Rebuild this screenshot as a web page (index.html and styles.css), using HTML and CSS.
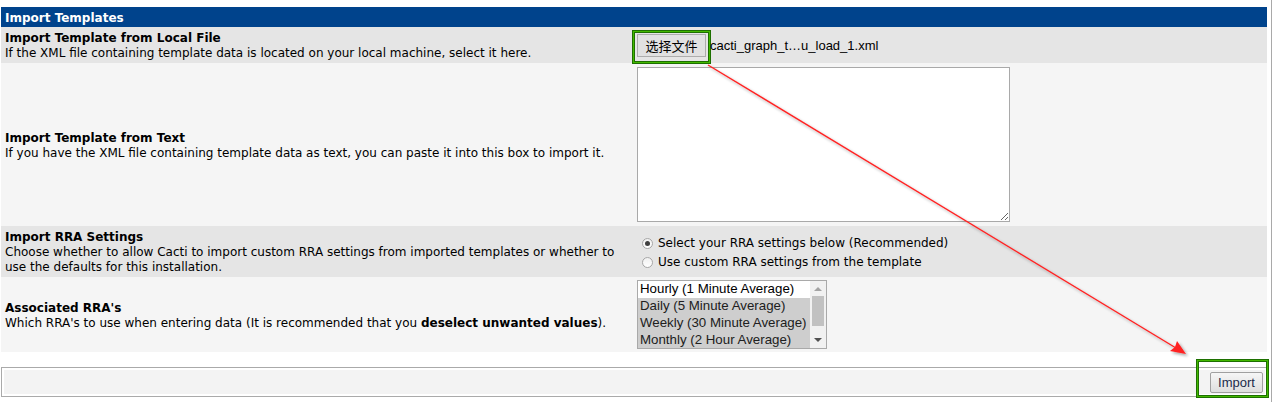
FILE: index.html
```html
<!DOCTYPE html>
<html>
<head>
<meta charset="utf-8">
<title>Import Templates</title>
<link rel="stylesheet" href="styles.css">
</head>
<body>
<div class="page">
  <table class="form">
    <tr class="hdr"><td colspan="2">Import Templates</td></tr>
    <tr class="odd r1">
      <td class="lbl"><b>Import Template from Local File</b><br>If the XML file containing template data is located on your local machine, select it here.</td>
      <td class="ctl">
        <div class="file">
          <span class="hl hl-file"><button class="btn-file">选择文件</button></span>
          <span class="fname">cacti_graph_t…u_load_1.xml</span>
        </div>
      </td>
    </tr>
    <tr class="even r2">
      <td class="lbl"><b>Import Template from Text</b><br>If you have the XML file containing template data as text, you can paste it into this box to import it.</td>
      <td class="ctl"><textarea class="txt"></textarea></td>
    </tr>
    <tr class="odd r3">
      <td class="lbl"><b>Import RRA Settings</b><br>Choose whether to allow Cacti to import custom RRA settings from imported templates or whether to use the defaults for this installation.</td>
      <td class="ctl">
        <label class="radio"><span class="rb on"></span>Select your RRA settings below (Recommended)</label>
        <label class="radio"><span class="rb"></span>Use custom RRA settings from the template</label>
      </td>
    </tr>
    <tr class="even r4">
      <td class="lbl"><b>Associated RRA's</b><br>Which RRA's to use when entering data (It is recommended that you <b>deselect unwanted values</b>).</td>
      <td class="ctl">
        <div class="listbox">
          <div class="opts">
            <div class="opt">Hourly (1 Minute Average)</div>
            <div class="opt sel">Daily (5 Minute Average)</div>
            <div class="opt sel">Weekly (30 Minute Average)</div>
            <div class="opt sel">Monthly (2 Hour Average)</div>
          </div>
          <div class="sbar">
            <span class="arr up"></span>
            <span class="thumb"></span>
            <span class="arr down"></span>
          </div>
        </div>
      </td>
    </tr>
  </table>
  <div class="save">
    <div class="save-in">
      <span class="hl hl-import"><button class="btn-import">Import</button></span>
    </div>
  </div>
  <svg class="arrow" width="1273" height="402" viewBox="0 0 1273 402">
    <defs>
      <filter id="sh" x="-10%" y="-10%" width="130%" height="130%">
        <feGaussianBlur in="SourceAlpha" stdDeviation="1.6"/>
        <feOffset dx="2" dy="2" result="b"/>
        <feComponentTransfer><feFuncA type="linear" slope="0.35"/></feComponentTransfer>
        <feMerge><feMergeNode/><feMergeNode in="SourceGraphic"/></feMerge>
      </filter>
    </defs>
    <g filter="url(#sh)">
      <line x1="708" y1="65" x2="1176" y2="348" stroke="#ff2222" stroke-width="1.4"/>
      <polygon points="1186,354 1170,351 1175,347 1177,341" fill="#ff2222"/>
    </g>
  </svg>
</div>
</body>
</html>
```
FILE: styles.css
```css
html, body {
  margin: 0;
  padding: 0;
  background: #fff;
}
body {
  font-family: "DejaVu Sans", Verdana, sans-serif;
  font-size: 12px;
  color: #000;
}
.page {
  position: relative;
  width: 1272px;
  height: 402px;
  box-sizing: border-box;
  padding: 7px 0 0 1px;
  border-right: 1px solid #a9a9a9;
}
.form {
  width: 1266px;
  border-collapse: collapse;
  border-spacing: 0;
}
.form td {
  padding: 0;
  vertical-align: middle;
}
.hdr td {
  background: #00438c;
  color: #fff;
  font-weight: bold;
  height: 20px;
  box-sizing: border-box;
  padding: 1px 4px 0 4px;
  font-size: 12px;
}
.odd { background: #e5e5e5; }
.even { background: #f5f5f5; }
.lbl {
  width: 623px;
  padding: 4px 4px 2px 4px !important;
  line-height: 15px;
}
.ctl {
  padding: 0 0 0 4px !important;
}
.r1 { height: 36px; }
.r2 { height: 163px; }
.r3 { height: 51px; }
.r4 { height: 75px; }

.file {
  display: flex;
  align-items: center;
}
.hl {
  position: relative;
  display: inline-flex;
}
.hl::before {
  content: "";
  position: absolute;
  border: 1px solid #1d7000;
  box-shadow: inset 0 0 0 1px #43b800, inset 0 0 0 2px #1d7000;
  pointer-events: none;
}
.hl-file {
  margin-left: 1px;
  margin-top: 1px;
}
.hl-file::before {
  left: -5px;
  top: -4px;
  right: -5px;
  bottom: -7px;
}
.btn-file {
  font-family: "Noto Sans CJK SC", sans-serif;
  font-size: 13px;
  width: 69px;
  height: 23px;
  padding: 0;
  background: #e1e1e1;
  border: 1px solid #adadad;
  color: #000;
  line-height: 20px;
}
.fname {
  font-family: "Liberation Sans", Arial, sans-serif;
  font-size: 13px;
  margin-left: 4px;
  position: relative;
  top: 0;
}
.txt {
  display: block;
  width: 373px;
  height: 155px;
  box-sizing: border-box;
  border: 1px solid #a9a9a9;
  background: #fff;
  margin: 0 0 0 1px;
  padding: 2px;
  resize: both;
}
.radio {
  display: flex;
  align-items: center;
  height: 19px;
  font-size: 12px;
  color: #000;
  position: relative;
  top: 1px;
}
.rb {
  width: 11px;
  height: 11px;
  border-radius: 50%;
  border: 1px solid #a6a6a6;
  box-sizing: border-box;
  background: linear-gradient(#f0f0f0, #ffffff);
  margin: 0 5px 0 6px;
  position: relative;
}
.rb.on::after {
  content: "";
  position: absolute;
  left: 2px;
  top: 2px;
  width: 5px;
  height: 5px;
  border-radius: 50%;
  background: #404040;
}
.listbox {
  display: flex;
  width: 190px;
  height: 69px;
  box-sizing: border-box;
  border: 1px solid #a9a9a9;
  background: #fff;
  margin-left: 1px;
  font-family: "Liberation Sans", Arial, sans-serif;
  font-size: 13.3px;
}
.opts {
  flex: 1;
  overflow: hidden;
}
.opt {
  height: 17px;
  line-height: 16px;
  padding-left: 2px;
  white-space: nowrap;
  color: #000;
}
.opt.sel {
  background: #cecece;
  color: #202020;
}
.sbar {
  width: 16px;
  background: #f1f1f1;
  display: flex;
  flex-direction: column;
  align-items: center;
}
.arr {
  width: 0;
  height: 0;
  border-left: 4px solid transparent;
  border-right: 4px solid transparent;
}
.arr.up {
  border-bottom: 4px solid #a3a3a3;
  margin-top: 6px;
}
.arr.down {
  border-top: 4px solid #505050;
  margin-bottom: 6px;
}
.thumb {
  width: 12px;
  flex: 1;
  background: #c1c1c1;
  margin: 5px 0 12px;
}
.save {
  margin-top: 15px;
  width: 1267px;
  height: 30px;
  box-sizing: border-box;
  border: 1px solid #aaaaaa;
  padding: 2px;
  background: #fff;
}
.save-in {
  height: 100%;
  background: #f3f3f3;
  display: flex;
  justify-content: flex-end;
  align-items: center;
  padding-right: 2px;
}
.hl-import::before {
  left: -14px;
  top: -13px;
  right: -6px;
  bottom: -5px;
}
.btn-import {
  font-family: "Liberation Sans", Arial, sans-serif;
  font-size: 13px;
  width: 53px;
  height: 21px;
  padding: 0;
  border: 1px solid #a0a0a0;
  border-radius: 2px;
  background: linear-gradient(#f6f6f6, #dedede);
  color: #1a2a4a;
}
.arrow {
  position: absolute;
  left: 0;
  top: 0;
  pointer-events: none;
}
```
